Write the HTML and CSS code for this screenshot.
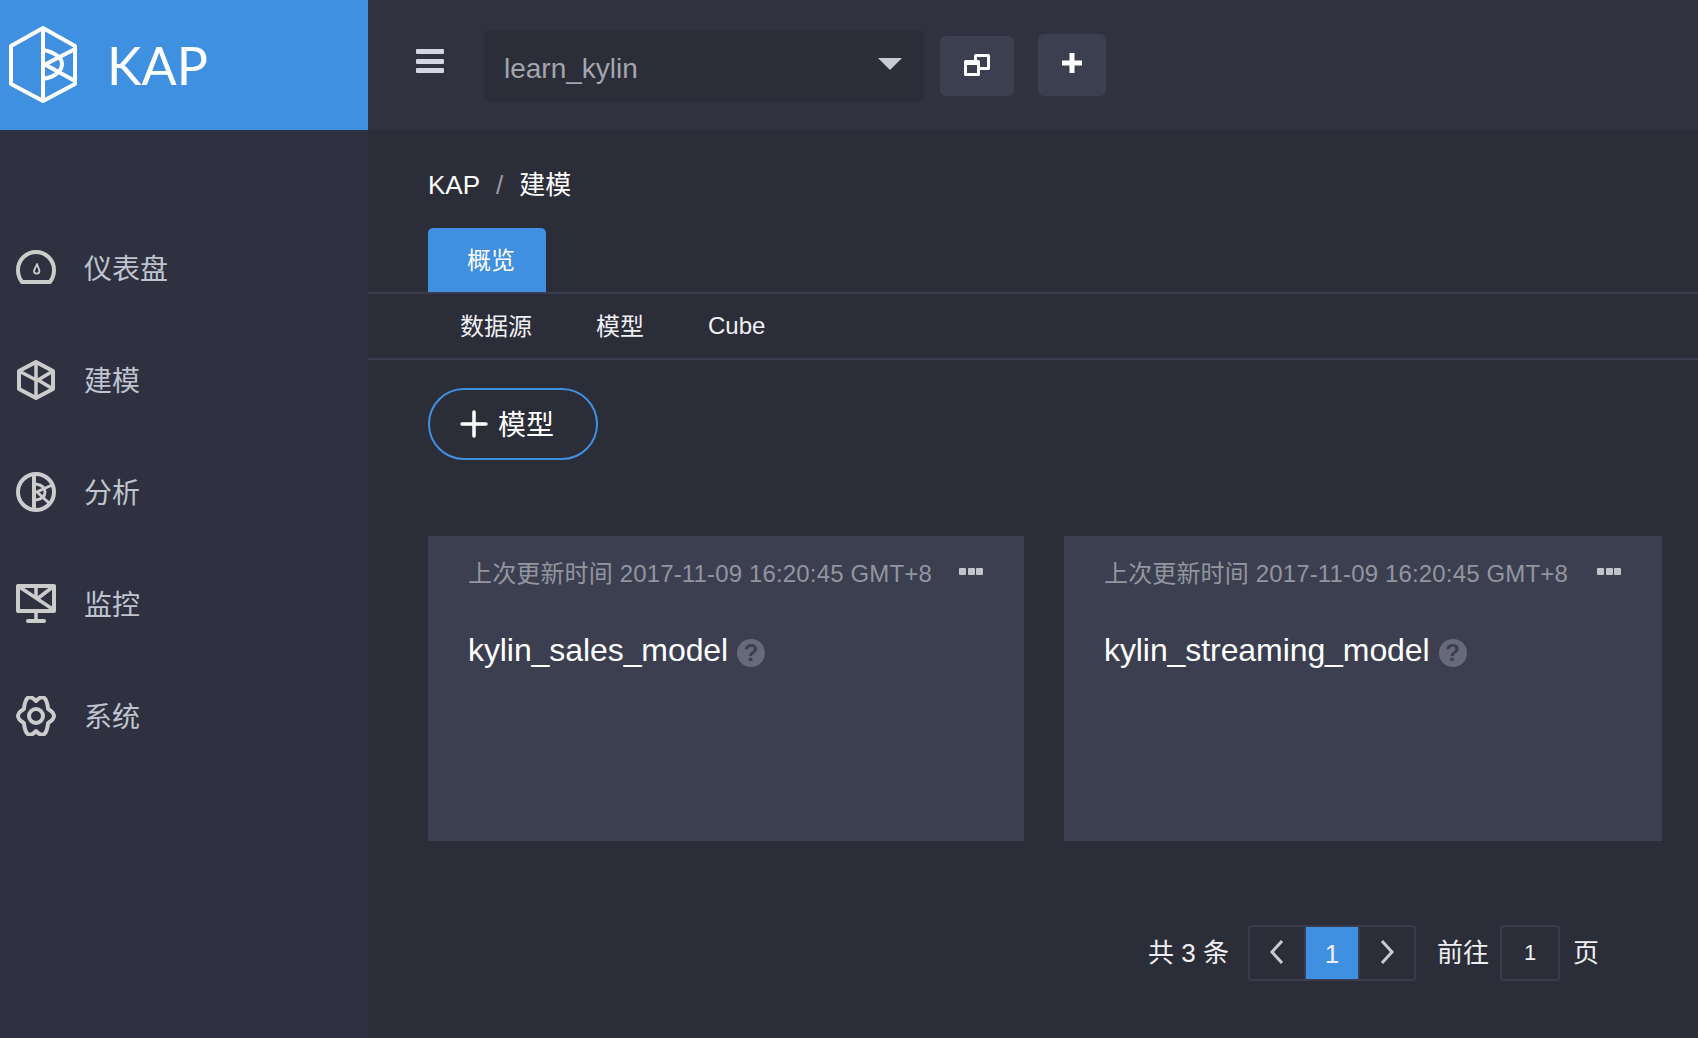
FILE: index.html
```html
<!DOCTYPE html>
<html lang="en">
<head>
    <meta charset="UTF-8">
    <meta name="viewport" content="width=device-width, initial-scale=1.0">
    <title>KAP</title>
    <link rel="stylesheet" href="styles.css">
</head>
<body>
<div class="app">
    <aside class="sidebar">
        <div class="logo">
            <svg class="logo-mark" viewBox="0 0 68 77" fill="none" stroke="#fff" stroke-width="4" stroke-linejoin="round">
                <path d="M34 2 L66 20 V58 L34 75 L2 58 V20 Z"/>
                <path d="M34 2 V75"/>
                <path d="M34 24 C46 26 53 32 53 38 C53 45 46 51 34 53"/>
                <path d="M66 23 L36 38.5 L66 55"/>
            </svg>
            <span class="logo-text">KAP</span>
        </div>
        <nav class="nav">
            <a class="nav-item">
                <svg class="nav-icon" viewBox="0 0 40 40" fill="none" stroke="#ccc" stroke-width="4" stroke-linejoin="round">
                    <path d="M6 34 C3 30 2 26 2 22 A18 18 0 0 1 38 22 C38 26 37 30 34 34 Z"/>
                    <path d="M21 16 C19.5 20 18 21.5 18 23 A2.7 2.7 0 0 0 23.4 23 C23.4 21 22 20 21 16 Z" stroke-width="1.8"/>
                </svg>
                <span>仪表盘</span>
            </a>
            <a class="nav-item">
                <svg class="nav-icon" viewBox="0 0 40 40" fill="none" stroke="#ccc" stroke-width="4" stroke-linejoin="round">
                    <path d="M20 2 L37 11 V29 L20 38 L3 29 V11 Z"/>
                    <path d="M20 2 V38 M3 11 L20 20 M37 11 L22 20 L37 29" stroke-width="3.5"/>
                </svg>
                <span>建模</span>
            </a>
            <a class="nav-item">
                <svg class="nav-icon" viewBox="0 0 40 40" fill="none" stroke="#ccc" stroke-width="4">
                    <circle cx="20" cy="20" r="18"/>
                    <path d="M18 2 V38"/>
                    <path d="M36 13 L21 20 L33 31" stroke-width="3"/>
                    <path d="M20 12 C26 13 29 16 29 20 C29 24 26 27 20 28" stroke-width="3"/>
                </svg>
                <span>分析</span>
            </a>
            <a class="nav-item">
                <svg class="nav-icon" viewBox="0 0 40 40" fill="none" stroke="#ccc" stroke-width="4" stroke-linejoin="round">
                    <path d="M2 2 H38 V27 H2 Z"/>
                    <path d="M2 2 L38 26 M38 2 L21 15 M20 2 V15 M20 27 V37" stroke-width="3.5"/>
                    <path d="M12 37 H28" stroke-linecap="round"/>
                </svg>
                <span>监控</span>
            </a>
            <a class="nav-item">
                <svg class="nav-icon" viewBox="0 0 40 40" fill="none" stroke="#ccc" stroke-width="4" stroke-linejoin="round">
                    <path d="M32.12 13 Q43.9 20 32.12 27 Q30 45.5 20 35 Q10 45.5 7.88 27 Q-3.9 20 7.88 13 Q10 -5.5 20 5 Q30 -5.5 32.12 13 Z"/>
                    <circle cx="20" cy="20" r="7"/>
                </svg>
                <span>系统</span>
            </a>
        </nav>
    </aside>
    <div class="main">
        <header class="topbar">
            <div class="burger"><i></i><i></i><i></i></div>
            <div class="project-select">
                <span>learn_kylin</span>
                <b class="caret"></b>
            </div>
            <button class="top-btn copy-btn">
                <svg width="28" height="24" viewBox="0 0 28 24" fill="none" stroke="#fff" stroke-width="3" stroke-linejoin="round">
                    <path d="M12.5 7 V1.5 H25.5 V14.5 H16"/>
                    <path d="M2.5 7.5 H15.5 V20.5 H2.5 Z"/>
                    <path d="M2.5 10 H15.5" stroke-width="2"/>
                </svg>
            </button>
            <button class="top-btn plus-btn">
                <svg width="20" height="20" viewBox="0 0 20 20" stroke="#fff" stroke-width="5"><path d="M10 0 V20 M0 10 H20"/></svg>
            </button>
        </header>
        <section class="content">
            <div class="breadcrumb"><span>KAP</span><em>/</em><span>建模</span></div>
            <div class="tabs">
                <a class="tab active">概览</a>
            </div>
            <div class="subtabs">
                <a>数据源</a>
                <a>模型</a>
                <a>Cube</a>
            </div>
            <button class="add-btn">
                <svg width="28" height="28" viewBox="0 0 28 28" stroke="#fff" stroke-width="3.5" stroke-linecap="round"><path d="M14 2 V26 M2 14 H26"/></svg>
                <span>模型</span>
            </button>
            <div class="cards">
                <div class="card">
                    <div class="card-meta">
                        <span>上次更新时间 2017-11-09 16:20:45 GMT+8</span>
                        <div class="dots"><i></i><i></i><i></i></div>
                    </div>
                    <div class="card-title">kylin_sales_model <span class="help">?</span></div>
                </div>
                <div class="card">
                    <div class="card-meta">
                        <span>上次更新时间 2017-11-09 16:20:45 GMT+8</span>
                        <div class="dots"><i></i><i></i><i></i></div>
                    </div>
                    <div class="card-title">kylin_streaming_model <span class="help">?</span></div>
                </div>
            </div>
            <div class="pager">
                <span class="total">共 3 条</span>
                <div class="pages">
                    <a class="page-arrow">
                        <svg width="14" height="24" viewBox="0 0 14 24" fill="none" stroke="#c8cad4" stroke-width="3"><path d="M12 1 L2 12 L12 23"/></svg>
                    </a>
                    <a class="page-num">1</a>
                    <a class="page-arrow">
                        <svg width="14" height="24" viewBox="0 0 14 24" fill="none" stroke="#c8cad4" stroke-width="3"><path d="M2 1 L12 12 L2 23"/></svg>
                    </a>
                </div>
                <span class="goto">前往</span>
                <div class="page-input">1</div>
                <span class="goto-end">页</span>
            </div>
        </section>
    </div>
</div>
</body>
</html>
```

FILE: styles.css
```css
* {
    box-sizing: border-box;
}
body {
    margin: 0;
    font-family: "Liberation Sans", "Noto Sans CJK SC", sans-serif;
    background-color: #2b2d38;
    color: #fff;
}
.app {
    display: flex;
    width: 1698px;
    height: 1038px;
    overflow: hidden;
}
.sidebar {
    width: 368px;
    flex-shrink: 0;
    background-color: #2f3140;
}
.logo {
    height: 130px;
    background-color: #4090e2;
    display: flex;
    align-items: center;
    padding-left: 9px;
}
.logo-mark {
    width: 68px;
    height: 77px;
    margin-top: -2px;
}
.logo-text {
    font-family: "Lato", sans-serif;
    font-size: 52px;
    margin-left: 30px;
    margin-top: -1px;
}
.nav {
    padding-top: 82px;
}
.nav-item {
    display: flex;
    align-items: center;
    height: 112px;
    padding-left: 16px;
    font-size: 28px;
    color: #bfc4cf;
}
.nav-item span {
    margin-top: -2px;
}
.nav-icon {
    width: 40px;
    height: 40px;
    margin-right: 28px;
}
.main {
    flex: 1;
    display: flex;
    flex-direction: column;
}
.topbar {
    height: 130px;
    background-color: #30323f;
    display: flex;
    align-items: center;
    padding-left: 48px;
}
.burger {
    width: 28px;
    margin-top: -8px;
}
.burger i {
    display: block;
    height: 5px;
    margin-bottom: 4.5px;
    background-color: #d3d5e0;
    border-radius: 1px;
}
.burger i:last-child {
    margin-bottom: 0;
}
.project-select {
    width: 440px;
    height: 72px;
    margin-left: 40px;
    margin-top: 2px;
    padding: 0 22px 0 20px;
    background-color: #2b2d38;
    border-radius: 6px;
    display: flex;
    align-items: center;
    justify-content: space-between;
    font-size: 28px;
    color: #a3a5ae;
}
.project-select span {
    margin-top: 5px;
}
.caret {
    width: 0;
    height: 0;
    border-left: 12px solid transparent;
    border-right: 12px solid transparent;
    border-top: 12px solid #c8cad4;
    margin-top: -4px;
}
.top-btn {
    border: none;
    padding: 0;
    background-color: #3c3f50;
    border-radius: 6px;
    display: flex;
    align-items: center;
    justify-content: center;
}
.copy-btn {
    width: 74px;
    height: 60px;
    margin-left: 16px;
    margin-top: 2px;
}
.plus-btn {
    width: 68px;
    height: 62px;
    margin-left: 24px;
    padding-bottom: 4px;
}
.content {
    flex: 1;
}
.breadcrumb {
    padding: 38px 0 0 60px;
    height: 98px;
    font-size: 26px;
    line-height: 34px;
}
.breadcrumb em {
    font-style: normal;
    color: #9a9ca6;
    margin: 0 16px;
}
.tabs {
    height: 66px;
    padding-left: 60px;
    border-bottom: 2px solid #3a3c4e;
}
.tab {
    display: block;
    width: 118px;
    height: 64px;
    padding-left: 8px;
    border-radius: 5px 5px 0 0;
    text-align: center;
    font-size: 24px;
    line-height: 66px;
}
.tab.active {
    background-color: #4090e2;
}
.subtabs {
    display: flex;
    height: 66px;
    padding-left: 92px;
    gap: 64px;
    align-items: center;
    font-size: 24px;
    border-bottom: 2px solid #3a3c4e;
    color: #f0f0f4;
}
.subtabs a:not(:last-child) {
    margin-bottom: 4px;
}
.add-btn {
    display: flex;
    align-items: center;
    width: 170px;
    height: 72px;
    margin: 28px 0 0 60px;
    padding: 0 0 0 30px;
    border: 2px solid #4090e2;
    border-radius: 36px;
    background: none;
    color: #fff;
    font-family: inherit;
    font-size: 28px;
}
.add-btn span {
    margin: -2px 0 0 10px;
}
.cards {
    display: grid;
    grid-template-columns: 596px 598px;
    gap: 40px;
    margin: 76px 0 0 60px;
}
.card {
    height: 305px;
    padding: 20px 41px 0 40px;
    background-color: #3c3f50;
}
.card-meta {
    display: flex;
    justify-content: space-between;
    font-size: 24px;
    line-height: 36px;
    letter-spacing: 0.15px;
    color: #93959f;
}
.dots {
    display: flex;
    gap: 1.5px;
    padding-top: 12px;
}
.dots i {
    display: block;
    width: 7px;
    height: 7px;
    border-radius: 1px;
    background-color: #c2c4cc;
}
.card-title {
    display: flex;
    align-items: center;
    gap: 9px;
    margin-top: 38px;
    font-size: 32px;
    line-height: 40px;
    letter-spacing: -0.08px;
}
.help {
    display: block;
    width: 28px;
    height: 28px;
    margin-top: 5px;
    border-radius: 50%;
    background-color: #666a7a;
    color: #3c3f50;
    font-size: 24px;
    font-weight: bold;
    line-height: 28px;
    text-align: center;
}
.pager {
    display: flex;
    align-items: center;
    height: 56px;
    margin-top: 84px;
    padding-left: 780px;
    font-size: 26px;
    color: #f0f0f4;
}
.total, .goto, .goto-end {
    padding-bottom: 6px;
}
.total {
    width: 100px;
}
.pages {
    display: flex;
    width: 168px;
    height: 56px;
    border: 2px solid #3a3c4e;
    border-radius: 4px;
}
.page-arrow {
    flex: 1;
    display: flex;
    align-items: center;
    justify-content: center;
    padding-bottom: 2px;
}
.page-num {
    width: 56px;
    border-left: 2px solid #3a3c4e;
    border-right: 2px solid #3a3c4e;
    background-color: #4090e2;
    background-clip: padding-box;
    text-align: center;
    font-size: 26px;
    line-height: 54px;
}
.goto {
    margin-left: 21px;
}
.page-input {
    width: 60px;
    height: 56px;
    margin-left: 11px;
    border: 2px solid #3a3c4e;
    border-radius: 4px;
    text-align: center;
    font-size: 22px;
    line-height: 52px;
}
.goto-end {
    margin-left: 13px;
}
```
